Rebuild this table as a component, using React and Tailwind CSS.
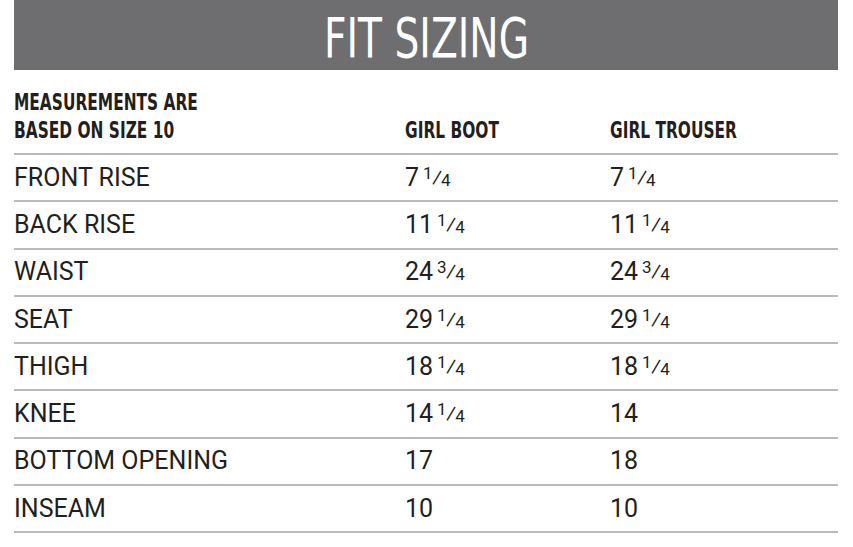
const rows = [
  ["FRONT RISE", "7", "1/4", "7", "1/4"],
  ["BACK RISE", "11", "1/4", "11", "1/4"],
  ["WAIST", "24", "3/4", "24", "3/4"],
  ["SEAT", "29", "1/4", "29", "1/4"],
  ["THIGH", "18", "1/4", "18", "1/4"],
  ["KNEE", "14", "1/4", "14", ""],
  ["BOTTOM OPENING", "17", "", "18", ""],
  ["INSEAM", "10", "", "10", ""],
];

const condensed = { fontFamily: '"DejaVu Sans", sans-serif' };

function Value({ whole, frac }) {
  const [num, den] = frac ? frac.split("/") : [];
  return (
    <div className="whitespace-nowrap">
      {whole}
      {frac && (
        <span className="ml-[4px] inline-flex items-baseline">
          <span className="text-[17px] relative -top-[7px]">{num}</span>
          <span className="text-[23px] -mx-[1px]">⁄</span>
          <span className="text-[17px]">{den}</span>
        </span>
      )}
    </div>
  );
}

function Head({ children }) {
  return (
    <div className="whitespace-nowrap">
      <span className="inline-block origin-left scale-x-[0.67]">{children}</span>
    </div>
  );
}

export default function App() {
  return (
    <div className="w-[853px] h-[547px] bg-white pl-[14px] pr-[15px] text-[#231f20]">
      {/* TITLE BAR */}
      <div className="h-[70px] bg-[#6e6e70] flex items-center justify-center">
        <h1
          className="text-white text-[56px] leading-none scale-x-[0.7] mt-[6px]"
          style={condensed}
        >
          FIT SIZING
        </h1>
      </div>

      {/* HEADER */}
      <div
        className="grid grid-cols-[391px_205px_1fr] items-end h-[85px] pb-[9px] border-b-2 border-[#bababa] font-bold text-[23px] leading-[28px]"
        style={condensed}
      >
        <div>
          <Head>MEASUREMENTS ARE</Head>
          <Head>BASED ON SIZE 10</Head>
        </div>
        <Head>GIRL BOOT</Head>
        <Head>GIRL TROUSER</Head>
      </div>

      {/* ROWS */}
      {rows.map(([label, boot, bootFrac, trouser, trouserFrac]) => (
        <div
          key={label}
          className="grid grid-cols-[391px_205px_1fr] items-center h-[47.25px] border-b-2 border-[#bababa] text-[25px] tracking-normal"
          style={{ fontFamily: "Roboto, sans-serif" }}
        >
          <div>{label}</div>
          <Value whole={boot} frac={bootFrac} />
          <Value whole={trouser} frac={trouserFrac} />
        </div>
      ))}
    </div>
  );
}
